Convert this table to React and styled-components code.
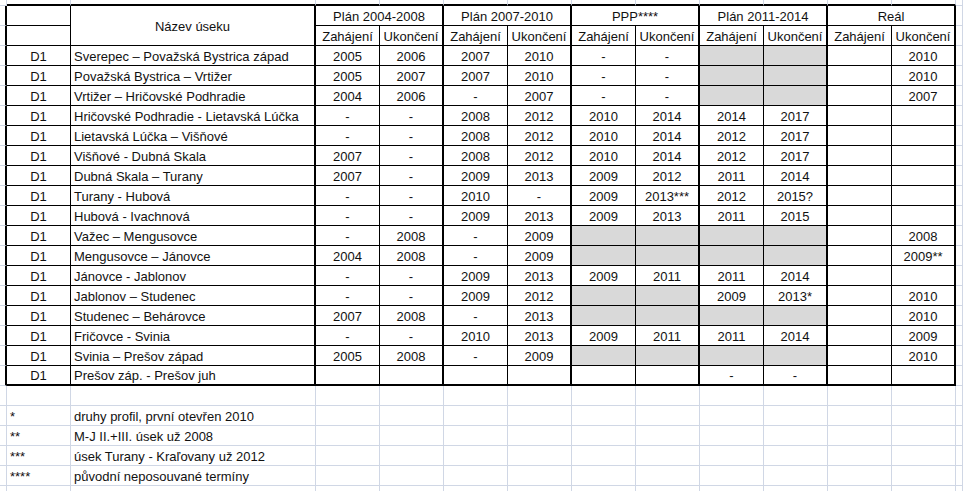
import React from "react";
import styled, { createGlobalStyle } from "styled-components";

const GRID = "#d0d7e5";
const INK = "#000";
const G = "G"; // grey filled cell

const GlobalStyle = createGlobalStyle`
  html, body {
    margin: 0;
    padding: 0;
    background: #fff;
  }
  body {
    font-family: "Liberation Sans", Arial, sans-serif;
  }
`;

const Sheet = styled.div`
  display: grid;
  grid-template-columns: 7px 64px 245px repeat(10, 64px) 1fr;
  grid-template-rows: 6px repeat(25, 20px);
  width: 963px;
  height: 491px;
  overflow: hidden;
  font-size: 13px;
  color: #111;
  background: #fff;
`;

const Cell = styled.div`
  box-sizing: border-box;
  display: flex;
  align-items: center;
  justify-content: ${(p) => (p.$left ? "flex-start" : "center")};
  padding: ${(p) => (p.$left ? "1px 0 0 3px" : "1px 0 0 0")};
  border-right: ${(p) => p.$rw || 1}px solid ${(p) => p.$rc || GRID};
  border-bottom: ${(p) => p.$bw || 1}px solid ${(p) => p.$bc || GRID};
  background: ${(p) => (p.$fill ? "#d9d9d9" : "#fff")};
  grid-column: span ${(p) => p.$cols || 1};
  grid-row: span ${(p) => p.$rows || 1};
  white-space: nowrap;
  overflow: hidden;
`;

const groups = ["Plán 2004-2008", "Plán 2007-2010", "PPP****", "Plán 2011-2014", "Reál"];

const rows = [
  ["Sverepec – Považská Bystrica západ", ["2005", "2006", "2007", "2010", "-", "-", G, G, "", "2010"]],
  ["Považská Bystrica – Vrtižer", ["2005", "2007", "2007", "2010", "-", "-", G, G, "", "2010"]],
  ["Vrtižer – Hričovské Podhradie", ["2004", "2006", "-", "2007", "-", "-", G, G, "", "2007"]],
  ["Hričovské Podhradie - Lietavská Lúčka", ["-", "-", "2008", "2012", "2010", "2014", "2014", "2017", "", ""]],
  ["Lietavská Lúčka – Višňové", ["-", "-", "2008", "2012", "2010", "2014", "2012", "2017", "", ""]],
  ["Višňové - Dubná Skala", ["2007", "-", "2008", "2012", "2010", "2014", "2012", "2017", "", ""]],
  ["Dubná Skala – Turany", ["2007", "-", "2009", "2013", "2009", "2012", "2011", "2014", "", ""]],
  ["Turany - Hubová", ["-", "-", "2010", "-", "2009", "2013***", "2012", "2015?", "", ""]],
  ["Hubová - Ivachnová", ["-", "-", "2009", "2013", "2009", "2013", "2011", "2015", "", ""]],
  ["Važec – Mengusovce", ["-", "2008", "-", "2009", G, G, G, G, "", "2008"]],
  ["Mengusovce – Jánovce", ["2004", "2008", "-", "2009", G, G, G, G, "", "2009**"]],
  ["Jánovce - Jablonov", ["-", "-", "2009", "2013", "2009", "2011", "2011", "2014", "", ""]],
  ["Jablonov – Studenec", ["-", "-", "2009", "2012", G, G, "2009", "2013*", "", "2010"]],
  ["Studenec – Behárovce", ["2007", "2008", "-", "2013", G, G, G, G, "", "2010"]],
  ["Fričovce - Svinia", ["-", "-", "2010", "2013", "2009", "2011", "2011", "2014", "", "2009"]],
  ["Svinia – Prešov západ", ["2005", "2008", "-", "2009", G, G, G, G, "", "2010"]],
  ["Prešov záp. - Prešov juh", ["", "", "", "", "", "", "-", "-", "", ""]],
];

const notes = [
  ["", ""],
  ["*", "druhy profil, první otevřen 2010"],
  ["**", "M-J II.+III. úsek už 2008"],
  ["***", "úsek Turany - Kraľovany už 2012"],
  ["****", "původní neposouvané termíny"],
  ["", ""],
];

const subs = Array.from({ length: 10 }, (_, i) => (i % 2 === 0 ? "Zahájení" : "Ukončení"));

export default function App() {
  const cells = [];
  let k = 0;
  const add = (props, text) => cells.push(<Cell key={k++} {...props}>{text}</Cell>);

  // strip above the table
  add({});
  add({ $bw: 2, $bc: INK });
  add({ $bw: 2, $bc: INK });
  for (let i = 0; i < 10; i++) add({ $bw: 2, $bc: INK });
  add({});

  // header row 1
  add({ $rw: 2, $rc: INK });
  add({ $rc: INK, $bc: INK });
  add({ $rows: 2, $rw: 2, $rc: INK, $bc: INK }, "Název úseku");
  groups.forEach((g) => add({ $cols: 2, $rw: 2, $rc: INK, $bc: INK }, g));
  add({});

  // header row 2
  add({ $rw: 2, $rc: INK });
  add({ $rc: INK, $bc: INK });
  subs.forEach((s, i) => add({ $rw: i % 2 ? 2 : 1, $rc: INK, $bc: INK }, s));
  add({});

  // data rows
  rows.forEach(([name, vals], r) => {
    const last = r === rows.length - 1;
    const bw = last ? 2 : 1;
    add({ $rw: 2, $rc: INK });
    add({ $rc: INK, $bc: INK, $bw: bw }, "D1");
    add({ $left: true, $rw: 2, $rc: INK, $bc: INK, $bw: bw }, name);
    vals.forEach((v, i) =>
      add({ $rw: i % 2 ? 2 : 1, $rc: INK, $bc: INK, $bw: bw, $fill: v === G }, v === G ? "" : v)
    );
    add({});
  });

  // footnotes below the table
  notes.forEach(([mark, text]) => {
    add({});
    add({ $left: true }, mark);
    add({ $left: true }, text);
    for (let i = 0; i < 10; i++) add({});
    add({});
  });

  return (
    <>
      <GlobalStyle />
      <Sheet>{cells}</Sheet>
    </>
  );
}
